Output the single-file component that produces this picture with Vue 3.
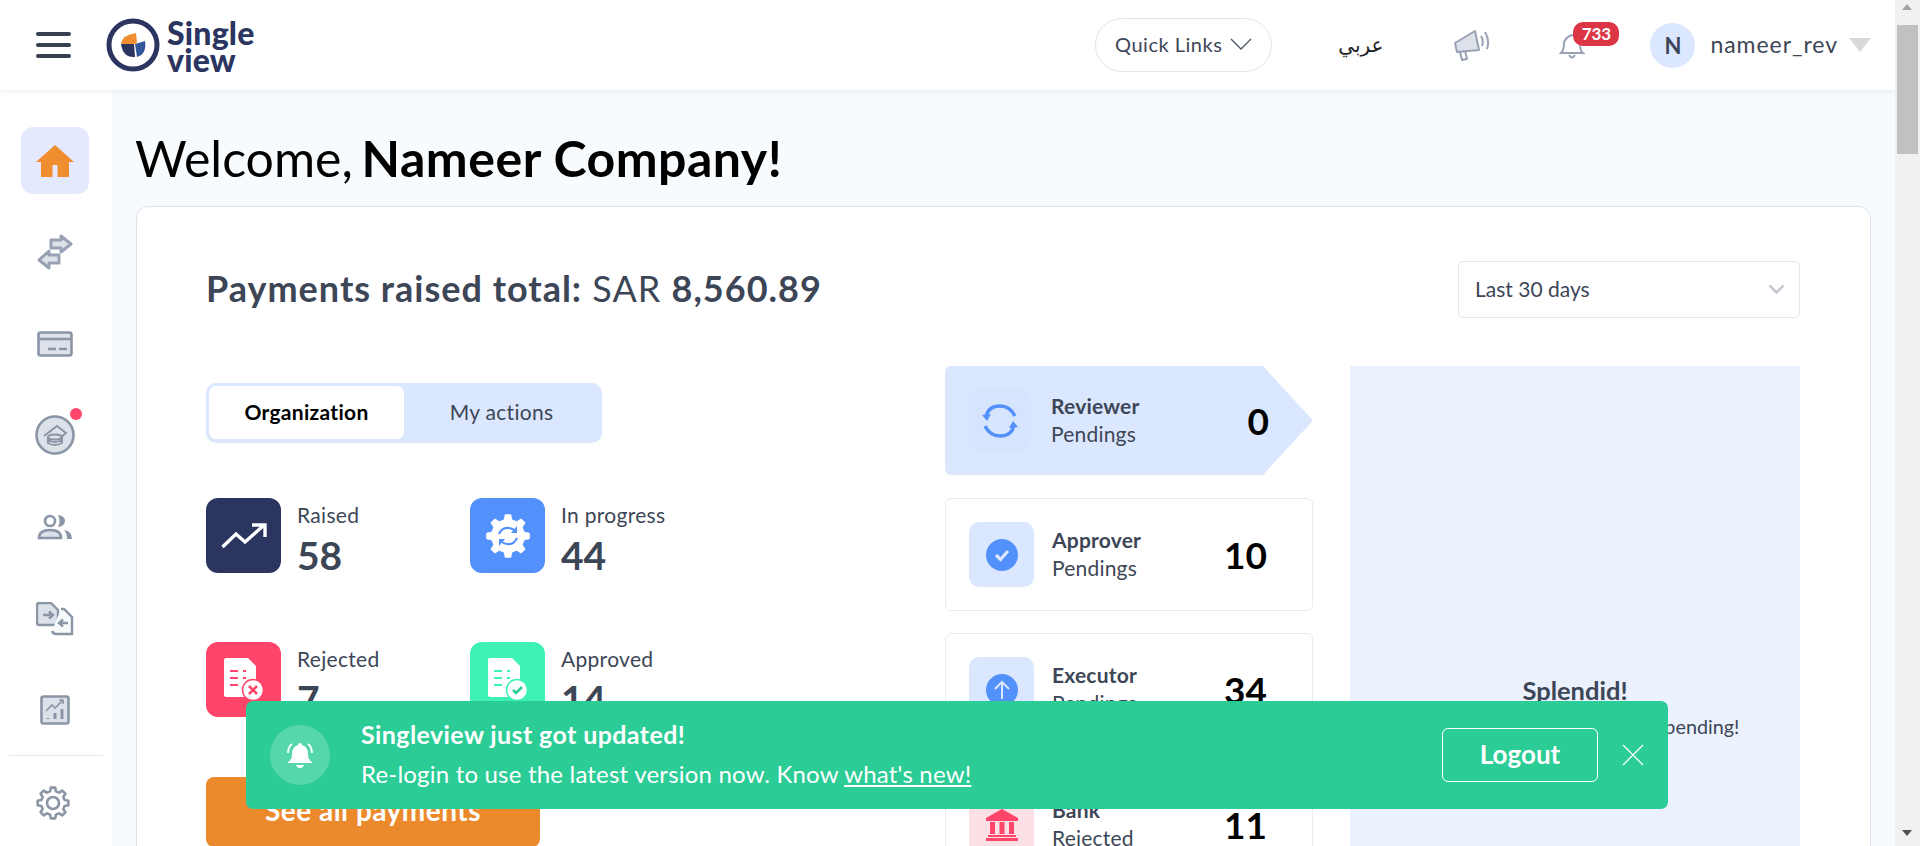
<template>
  <div class="app">
    <div class="page">
      <!-- top bar -->
      <header class="topbar">
        <button class="burger"><span></span><span></span><span></span></button>
        <div class="logo">
          <svg width="54" height="54" viewBox="0 0 54 54">
            <circle cx="27" cy="27" r="24" fill="none" stroke="#2b3560" stroke-width="5" />
            <path d="M15 25 Q17 17 30 15 L31 25 L21 29 Z" fill="#ef8d2f" />
            <path d="M15 26 L28 26 L29 39 Q17 40 15 26 Z" fill="#2b3560" />
            <path d="M29 26 L39 23 Q41 36 31 39 Z" fill="#34569c" />
          </svg>
          <div class="logo-text"><div>Single</div><div>view</div></div>
        </div>
        <div class="topbar-right">
          <button class="quick">
            Quick Links
            <svg width="22" height="12" viewBox="0 0 22 12"><path d="M1 1l10 10L21 1" fill="none" stroke="#4b5563" stroke-width="1.3" /></svg>
          </button>
          <span class="lang">عربي</span>
          <svg class="mega" width="38" height="32" viewBox="0 0 38 32" fill="none" stroke="#98a2b3" stroke-width="2" stroke-linejoin="round">
            <path d="M2 14l20-12 4 19-22 2z" fill="#dde2ea" />
            <path d="M7 23l2 8 5-1-2-8" />
            <path d="M28 7q3 5 1 10M32 3q5 8 2 17" />
          </svg>
          <div class="bell">
            <svg width="26" height="28" viewBox="0 0 26 28" fill="none" stroke="#98a2b3" stroke-width="2">
              <path d="M2 22q3-3 3-9t8-9q8 2 8 9t3 9z" />
              <path d="M10 24q3 5 6 0" />
            </svg>
            <span class="badge">733</span>
          </div>
          <div class="user">
            <span class="avatar">N</span>
            <span class="username">nameer_rev</span>
            <span class="caret"></span>
          </div>
        </div>
      </header>

      <div class="body">
        <!-- side nav -->
        <aside class="sidebar">
          <a class="nav-item active">
            <svg width="38" height="32" viewBox="0 0 38 32"><path d="M19 0L38 17H33V32H21.5V20H16.5V32H5V17H0Z" fill="#ef8d2f" /></svg>
          </a>
          <a class="nav-item">
            <svg width="36" height="36" viewBox="0 0 36 36" fill="#dde2ea" stroke="#98a2b3" stroke-width="3" stroke-linejoin="round">
              <path d="M14 6h10V2l10 8-10 8v-4H14z" />
              <path d="M22 21H12v-4L2 26l10 8v-5h10z" />
            </svg>
          </a>
          <a class="nav-item">
            <svg width="36" height="26" viewBox="0 0 36 26" fill="#dde2ea" stroke="#8a95a5" stroke-width="2.6">
              <rect x="1.5" y="1.5" width="33" height="23" rx="2" />
              <path d="M2 8h32M11 18h8M22 18h8" fill="none" />
            </svg>
          </a>
          <a class="nav-item">
            <svg width="40" height="40" viewBox="0 0 40 40" fill="none" stroke="#8a95a5" stroke-width="2">
              <circle cx="20" cy="20" r="18.5" fill="#dde2ea" stroke-width="2.6" />
              <path d="M9 21l13-10 9 7-6 5" />
              <ellipse cx="20" cy="22" rx="7" ry="2.6" />
              <path d="M13 22v3q7 4 14 0v-3M13 25v3q7 4 14 0v-3" />
            </svg>
            <span class="nav-dot"></span>
          </a>
          <a class="nav-item">
            <svg width="36" height="26" viewBox="0 0 36 26" fill="none" stroke="#8a95a5" stroke-width="2.6">
              <circle cx="13" cy="7" r="5" />
              <path d="M2 24q0-8 11-8t11 8z" fill="#dde2ea" />
              <path d="M21 1q7 1 7 6t-7 6q3-6 0-12z" fill="#8a95a5" stroke="none" />
              <path d="M27 16q8 1 8 9h-5q0-6-3-9z" fill="#8a95a5" stroke="none" />
            </svg>
          </a>
          <a class="nav-item">
            <svg width="38" height="34" viewBox="0 0 38 34" fill="none" stroke="#8a95a5" stroke-width="2.4">
              <path d="M3 1h12l7 7v15H3q-2 0-2-2V3q0-2 2-2z" fill="#dde2ea" />
              <path d="M7 13h9M13 9.500l4 3.500-4 3.500" />
              <path d="M25 7h3l8 8v17H20q-3 0-4-3" fill="#f8fbfd" />
              <path d="M32 21h-9M27 17.500l-4 3.500 4 3.500" />
            </svg>
          </a>
          <a class="nav-item">
            <svg width="30" height="30" viewBox="0 0 30 30" fill="#dde2ea" stroke="#8a95a5" stroke-width="2.6">
              <rect x="1.500" y="1.500" width="27" height="27" rx="2" />
              <path d="M6 16l6-6 3 3 8-8M19 5h4v4" fill="none" stroke-width="1.600" />
              <path d="M8 23v1M15 18v6M22 14v10" fill="none" stroke-width="3" />
            </svg>
          </a>
          <div class="nav-divider"></div>
          <a class="nav-item gear">
            <svg width="34" height="34" viewBox="0 0 34 34" fill="none" stroke="#8a95a5" stroke-width="2.6" stroke-linejoin="round">
              <path :d="gearPath(17, 17, 15.500, 12, 8)" />
              <circle cx="17" cy="17" r="6" />
            </svg>
          </a>
        </aside>

        <main class="main">
          <h1 class="welcome">Welcome, <strong>Nameer Company!</strong></h1>
          <section class="card">
            <div class="card-head">
              <h2 class="total"><b>Payments raised total:</b> SAR <b>8,560.89</b></h2>
              <div class="range">
                Last 30 days
                <svg width="17" height="10" viewBox="0 0 17 10"><path d="M1.500 1.500l7 7 7-7" fill="none" stroke="#c4c9d1" stroke-width="2.500" /></svg>
              </div>
            </div>

            <div class="columns">
              <div class="col-left">
                <div class="tabs">
                  <button class="tab on">Organization</button>
                  <button class="tab">My actions</button>
                </div>
                <div class="stats">
                  <div class="stat">
                    <div class="stat-tile navy">
                      <svg width="46" height="26" viewBox="0 0 46 26" fill="none" stroke="#fff" stroke-width="3.400">
                        <path d="M1.500 24L15 11l9 8L42 3" /><path d="M31 2h13v12" fill="none" />
                      </svg>
                    </div>
                    <div><div class="stat-label">Raised</div><div class="stat-num">58</div></div>
                  </div>
                  <div class="stat">
                    <div class="stat-tile blue">
                      <svg width="44" height="44" viewBox="0 0 44 44">
                        <path :d="gearPath(22, 22, 22, 17, 8)" fill="#fff" />
                        <path d="M13 20q3-7 10-6 4 .5 6 3M31 24q-3 7-10 6-4-.5-6-3" fill="none" stroke="#5290fb" stroke-width="2" />
                        <path d="M31 12v7h-6zM13 32v-7h6z" fill="#5290fb" />
                      </svg>
                    </div>
                    <div><div class="stat-label">In progress</div><div class="stat-num">44</div></div>
                  </div>
                  <div class="stat">
                    <div class="stat-tile red">
                      <svg width="40" height="44" viewBox="0 0 40 44">
                        <path d="M2 0h22l8 8v31H2q-2 0-2-2V2q0-2 2-2z" fill="#fff" />
                        <path d="M6 13h8M6 20h8M6 27h8M19 13h3M19 20h3" stroke="#ff4569" stroke-width="2" />
                        <circle cx="29" cy="32" r="10.500" fill="#fff" stroke="#ff4569" stroke-width="1.500" />
                        <path d="M25 28l8 8M33 28l-8 8" stroke="#ff4569" stroke-width="2.600" />
                      </svg>
                    </div>
                    <div><div class="stat-label">Rejected</div><div class="stat-num">7</div></div>
                  </div>
                  <div class="stat">
                    <div class="stat-tile mint">
                      <svg width="40" height="44" viewBox="0 0 40 44">
                        <path d="M2 0h22l8 8v31H2q-2 0-2-2V2q0-2 2-2z" fill="#fff" />
                        <path d="M6 13h8M6 20h8M6 27h8M19 13h3M19 20h3" stroke="#3ef2b4" stroke-width="2" />
                        <circle cx="29" cy="32" r="10.500" fill="#fff" stroke="#3ef2b4" stroke-width="1.500" />
                        <path d="M25 32l3 3 6-6" fill="none" stroke="#2bcc96" stroke-width="2.600" />
                      </svg>
                    </div>
                    <div><div class="stat-label">Approved</div><div class="stat-num">14</div></div>
                  </div>
                </div>
                <button class="see-all">See all payments</button>
              </div>

              <div class="col-mid">
                <div class="pending current">
                  <div class="pending-tile">
                    <svg width="36" height="34" viewBox="0 0 36 34" fill="none" stroke="#5290fb" stroke-width="3.400">
                      <path d="M4 13Q6 2 18 2q10 0 15 10M32 21Q30 32 18 32 8 32 3 22" />
                      <path d="M0 11l9-1-4 7zM36 23l-9 1 4-7z" fill="#5290fb" stroke="none" />
                    </svg>
                  </div>
                  <div class="pending-text"><b>Reviewer</b><span>Pendings</span></div>
                  <div class="pending-num">0</div>
                </div>
                <div class="pending">
                  <div class="pending-tile">
                    <svg width="32" height="32" viewBox="0 0 32 32">
                      <circle cx="16" cy="16" r="16" fill="#5290fb" />
                      <path d="M10 16l4.500 4.500L22 12" fill="none" stroke="#dbe7fe" stroke-width="3.200" />
                    </svg>
                  </div>
                  <div class="pending-text"><b>Approver</b><span>Pendings</span></div>
                  <div class="pending-num">10</div>
                </div>
                <div class="pending">
                  <div class="pending-tile">
                    <svg width="32" height="32" viewBox="0 0 32 32">
                      <circle cx="16" cy="16" r="16" fill="#5290fb" />
                      <path d="M16 25V8M9 15l7-7 7 7" fill="none" stroke="#dbe7fe" stroke-width="2" />
                    </svg>
                  </div>
                  <div class="pending-text"><b>Executor</b><span>Pendings</span></div>
                  <div class="pending-num">34</div>
                </div>
                <div class="pending">
                  <div class="pending-tile rose">
                    <svg width="32" height="32" viewBox="0 0 32 32" fill="#ff4569">
                      <path d="M16 0l16 9v3H0V9z" />
                      <path d="M4 13h5v12H4zM13.500 13h5v12h-5zM23 13h5v12h-5zM2 26h28v2H2zM0 29h32v3H0z" />
                    </svg>
                  </div>
                  <div class="pending-text"><b>Bank</b><span>Rejected</span></div>
                  <div class="pending-num">11</div>
                </div>
              </div>

              <div class="col-right">
                <h3>Splendid!</h3>
                <p>There are no more payments pending!</p>
              </div>
            </div>
          </section>
        </main>
      </div>
    </div>

    <!-- fake window scrollbar -->
    <div class="scrollbar">
      <i class="arrow-up"></i>
      <div class="thumb"></div>
      <i class="arrow-down"></i>
    </div>

    <!-- update banner -->
    <div class="update">
      <div class="update-icon">
        <svg width="30" height="30" viewBox="0 0 30 30" fill="#fff">
          <path d="M15 3q2 0 2 2 6 2 6 9 0 6 4 8v1H3v-1q4-2 4-8 0-7 6-9 0-2 2-2z" />
          <path d="M11 25h8q-1 3-4 3t-4-3z" />
          <path d="M3 13q0-6 4-9M27 13q0-6-4-9" fill="none" stroke="#fff" stroke-width="1.800" />
        </svg>
      </div>
      <div class="update-text">
        <b>Singleview just got updated!</b>
        <span>Re-login to use the latest version now. Know <u>what's new!</u></span>
      </div>
      <button class="logout">Logout</button>
      <svg class="close" width="22" height="22" viewBox="0 0 22 22"><path d="M1 1l20 20M21 1L1 21" stroke="#fff" stroke-width="1.300" /></svg>
    </div>
  </div>
</template>

<script setup>
// toothed ring outline, shared by the settings and in-progress icons
function gearPath(cx, cy, outer, inner, teeth) {
  const step = (Math.PI * 2) / teeth
  let d = ''
  for (let i = 0; i < teeth; i++) {
    const a = i * step
    const pts = [
      [inner, a - step * 0.32],
      [outer, a - step * 0.18],
      [outer, a + step * 0.18],
      [inner, a + step * 0.32]
    ]
    for (const [r, t] of pts) {
      const x = (cx + r * Math.cos(t)).toFixed(2)
      const y = (cy + r * Math.sin(t)).toFixed(2)
      d += (d ? 'L' : 'M') + x + ' ' + y
    }
  }
  return d + 'Z'
}
</script>

<style>
html, body { margin: 0; height: 100%; overflow: hidden; }
</style>

<style scoped>
.app {
  display: flex;
  position: relative;
  height: 846px;
  overflow: hidden;
  font-family: Lato, "Noto Sans", "DejaVu Sans", sans-serif;
  color: #3d4656;
  background: #f8fbfd;
}
.page { flex: 1; min-width: 0; display: flex; flex-direction: column; }
button { font-family: inherit; cursor: pointer; }

/* top bar */
.topbar {
  height: 90px;
  flex: none;
  display: flex;
  align-items: center;
  background: #fff;
  box-shadow: 0 1px 6px rgba(60, 70, 90, 0.1);
  position: relative;
  z-index: 2;
  padding: 0 24px 0 36px;
}
.burger { border: 0; background: none; padding: 0; width: 35px; display: flex; flex-direction: column; gap: 7px; margin-right: 35px; }
.burger span { display: block; height: 4px; border-radius: 2px; background: #374151; }
.logo { display: flex; align-items: center; gap: 7px; }
.logo-text { font-size: 32px; line-height: 27px; font-weight: 900; letter-spacing: 0.2px; color: #2b3560; padding-top: 1px; }
.topbar-right { margin-left: auto; display: flex; align-items: center; }
.quick {
  height: 54px;
  width: 177px;
  display: flex;
  align-items: center;
  justify-content: center;
  gap: 8px;
  padding: 0 0 2px;
  border: 1px solid #e2e4ec;
  border-radius: 27px;
  background: #fff;
  font-size: 20px;
  letter-spacing: 0.5px;
  color: #3d4656;
}
.lang { margin-left: 66px; font-size: 20px; color: #222; padding-bottom: 2px; }
.mega { margin-left: 70px; }
.bell { margin-left: 68px; position: relative; width: 26px; height: 28px; }
.badge {
  position: absolute;
  left: 14px;
  top: -9px;
  width: 46px;
  height: 24px;
  border-radius: 10px;
  background: #dc3545;
  color: #fff;
  font-size: 17px;
  font-weight: 700;
  line-height: 24px;
  text-align: center;
}
.user { margin-left: 65px; display: flex; align-items: center; }
.avatar {
  width: 45px;
  height: 45px;
  border-radius: 50%;
  background: #dbe7fe;
  font-size: 22px;
  font-weight: 700;
  line-height: 45px;
  text-align: center;
}
.username { margin-left: 15px; font-size: 23px; letter-spacing: 0.95px; padding-bottom: 2px; }
.caret { margin-left: 11px; border: 11px solid transparent; border-top: 14px solid #d9d9d9; border-bottom: 0; }

/* side nav */
.body { flex: 1; display: flex; min-height: 0; }
.sidebar {
  width: 112px;
  flex: none;
  background: #fff;
  padding-top: 37px;
  display: flex;
  flex-direction: column;
  align-items: center;
  gap: 24.670px;
}
.nav-item {
  width: 68px;
  height: 67px;
  flex: none;
  margin-left: -2px;
  display: flex;
  align-items: center;
  justify-content: center;
  border-radius: 12px;
  position: relative;
}
.nav-item.active { background: #e4e9fe; }
.nav-dot {
  position: absolute;
  right: 7px;
  top: 6px;
  width: 12px;
  height: 12px;
  border-radius: 50%;
  background: #ff4569;
}
.nav-divider { width: 94px; height: 1px; flex: none; background: #e5e7eb; margin: -13.670px 0 -11px; }
.gear { margin-left: -6px; }

/* main */
.main { flex: 1; min-width: 0; padding: 39px 24px 0; overflow: hidden; }
.welcome { margin: 0 0 19px -1px; font-size: 50px; line-height: 58px; font-weight: 400; color: #000; }
.welcome strong { font-weight: 700; letter-spacing: 0.5px; margin-left: -4px; }
.card {
  background: #fff;
  border: 1px solid #dde3ec;
  border-radius: 12px;
  padding: 54px 70px 40px 69px;
}
.card-head { display: flex; align-items: center; justify-content: space-between; }
.total { margin: 0 0 3px; font-size: 36px; font-weight: 400; letter-spacing: 1px; color: #3d4656; }
.total b { font-weight: 700; }
.range {
  width: 342px;
  height: 57px;
  box-sizing: border-box;
  padding: 0 14px 2px 16px;
  display: flex;
  align-items: center;
  justify-content: space-between;
  border: 1px solid #e2e5ea;
  border-radius: 5px;
  font-size: 21px;
}
.columns { display: flex; margin-top: 48px; }
.col-left { width: 739px; flex: none; padding-top: 17px; }
.tabs {
  width: 396px;
  height: 60px;
  box-sizing: border-box;
  padding: 3px 3px 4px;
  display: flex;
  background: #dbe7fe;
  border-radius: 10px;
}
.tab { flex: 1; border: 0; background: none; border-radius: 7px; font-size: 21px; letter-spacing: 0.3px; color: #3d4656; padding: 0 0 3px; }
.tab.on { flex: none; width: 195px; background: #fff; color: #000; font-weight: 700; }
.stats { display: grid; grid-template-columns: 264px 1fr; grid-auto-rows: 75px; row-gap: 69px; margin-top: 55px; }
.stat { display: flex; gap: 16px; }
.stat-tile {
  width: 75px;
  height: 75px;
  flex: none;
  border-radius: 12px;
  display: flex;
  align-items: center;
  justify-content: center;
}
.navy { background: #2b3560; }
.blue { background: #5290fb; }
.red { background: #ff4569; }
.mint { background: #3ef2b4; }
.stat-label { margin-top: 4px; font-size: 21px; letter-spacing: 0.3px; line-height: 26px; }
.stat-num { margin-top: 2px; font-size: 39px; line-height: 50px; font-weight: 700; }
.see-all {
  display: block;
  width: 334px;
  height: 70px;
  margin-top: 60px;
  padding: 0 0 4px;
  border: 0;
  border-radius: 8px;
  background: #eb8a2d;
  color: #fff;
  font-size: 28px;
  letter-spacing: 0.5px;
  font-weight: 700;
}

.col-mid { width: 368px; flex: none; display: flex; flex-direction: column; gap: 22px; }
.pending {
  height: 113px;
  box-sizing: border-box;
  padding: 0 45px 0 23px;
  display: flex;
  align-items: center;
  border: 1px solid #e9ebef;
  border-radius: 6px;
  flex: none;
}
.pending.current {
  height: 109px;
  margin-bottom: 1px;
  border: 0;
  padding: 0 44px 0 23px;
  background: #dbe7fe;
  clip-path: polygon(0 0, 318px 0, 100% 50%, 318px 100%, 0 100%);
}
.pending-tile {
  width: 65px;
  height: 65px;
  flex: none;
  border-radius: 10px;
  background: #dbe7fe;
  display: flex;
  align-items: center;
  justify-content: center;
}
.pending-tile.rose { background: #fde0e5; }
.current .pending-tile { width: 63px; height: 63px; background: #d7e4fd; }
.pending-text { flex: 1; margin-left: 18px; padding-bottom: 2px; display: flex; flex-direction: column; font-size: 21px; letter-spacing: 0.2px; line-height: 28px; }
.current .pending-text { margin-left: 20px; }
.pending-text b { font-weight: 700; }
.pending-num { font-size: 37px; font-weight: 700; color: #000; }

.col-right {
  width: 450px;
  margin-left: 37px;
  flex: none;
  background: #ebf2fe;
  padding-top: 309px;
  height: 560px;
  box-sizing: border-box;
  text-align: center;
}
.col-right h3 { margin: 0; font-size: 25.500px; line-height: 30px; font-weight: 700; }
.col-right p { margin: 9px 0 0; font-size: 19.800px; line-height: 24px; }

/* scrollbar */
.scrollbar {
  width: 25px;
  flex: none;
  position: relative;
  background: #f1f1f1;
  z-index: 3;
}
.thumb { position: absolute; left: 2px; right: 2px; top: 25px; height: 129px; background: #c1c1c1; }
.arrow-up, .arrow-down { position: absolute; left: 7px; border: 5.500px solid transparent; }
.arrow-up { top: 4px; border-bottom: 6px solid #a3a3a3; border-top: 0; }
.arrow-down { bottom: 10px; border-top: 6px solid #505050; border-bottom: 0; }

/* update banner */
.update {
  position: absolute;
  left: 246px;
  top: 701px;
  width: 1422px;
  height: 108px;
  box-sizing: border-box;
  padding: 0 24px;
  display: flex;
  align-items: center;
  background: #2bcc96;
  border-radius: 7px;
  color: #fff;
  z-index: 4;
}
.update-icon {
  width: 60px;
  height: 60px;
  flex: none;
  border-radius: 50%;
  background: rgba(255, 255, 255, 0.2);
  display: flex;
  align-items: center;
  justify-content: center;
}
.update-text { flex: 1; margin-left: 31px; padding-bottom: 2px; display: flex; flex-direction: column; gap: 10px; font-size: 24px; letter-spacing: 0.2px; line-height: 29px; }
.update-text b { font-size: 25px; letter-spacing: 0.4px; font-weight: 700; }
.logout {
  width: 156px;
  height: 54px;
  padding: 0 0 2px;
  border: 1px solid #fff;
  border-radius: 6px;
  background: none;
  color: #fff;
  font-size: 26px;
  font-weight: 700;
}
.close { margin-left: 24px; }
</style>
